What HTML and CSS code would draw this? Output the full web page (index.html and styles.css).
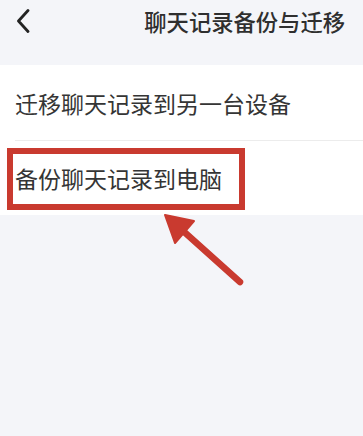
FILE: index.html
```html
<!DOCTYPE html>
<html lang="zh">
<head>
<meta charset="utf-8">
<link rel="stylesheet" href="styles.css">
</head>
<body>
<div class="page">
  <header class="nav">
    <span class="back">
      <svg width="14" height="24" viewBox="0 0 14 24"><path d="M12 1.5 L2.5 12 L12 22.5" fill="none" stroke="#232323" stroke-width="2.8" stroke-linecap="round" stroke-linejoin="round"/></svg>
    </span>
    <h1 class="title">聊天记录备份与迁移</h1>
  </header>
  <ul class="list">
    <li class="row">迁移聊天记录到另一台设备</li>
    <li class="row">备份聊天记录到电脑</li>
  </ul>
  <div class="highlight"></div>
  <svg class="arrow" width="100" height="90" viewBox="150 205 100 90">
    <line x1="240" y1="282" x2="172" y2="221" stroke="#c93a2f" stroke-width="6.5" stroke-linecap="round"/>
    <polygon points="165,215 194,221 175,243" fill="#c93a2f" stroke="#c93a2f" stroke-width="2" stroke-linejoin="round"/>
  </svg>
</div>
</body>
</html>
```
FILE: styles.css
```css
html, body {
  margin: 0;
  padding: 0;
  background: #f4f5f9;
}
.page {
  position: relative;
  width: 363px;
  height: 436px;
  overflow: hidden;
  font-family: "Noto Sans CJK SC", "Noto Sans", sans-serif;
  color: #353535;
}
.nav {
  display: flex;
  align-items: flex-start;
  height: 65px;
  padding: 0 18px 0 16px;
  box-sizing: border-box;
}
.back {
  display: flex;
  margin-top: 9px;
}
.title {
  margin: 6px 0 0 auto;
  font-size: 22.3px;
  font-weight: 500;
  line-height: 30px;
  color: #2f2f2f;
}
.list {
  list-style: none;
  margin: 0;
  padding: 0;
  background: #fff;
}
.row {
  height: 75px;
  display: flex;
  align-items: center;
  margin-left: 15px;
  font-size: 23px;
  line-height: 30px;
}
.row + .row {
  border-top: 1px solid #ececec;
  height: 74px;
}
.highlight {
  position: absolute;
  left: 7px;
  top: 148px;
  width: 238px;
  height: 62px;
  border: 6px solid #c93a2f;
  box-sizing: border-box;
}
.arrow {
  position: absolute;
  left: 150px;
  top: 205px;
}
```
